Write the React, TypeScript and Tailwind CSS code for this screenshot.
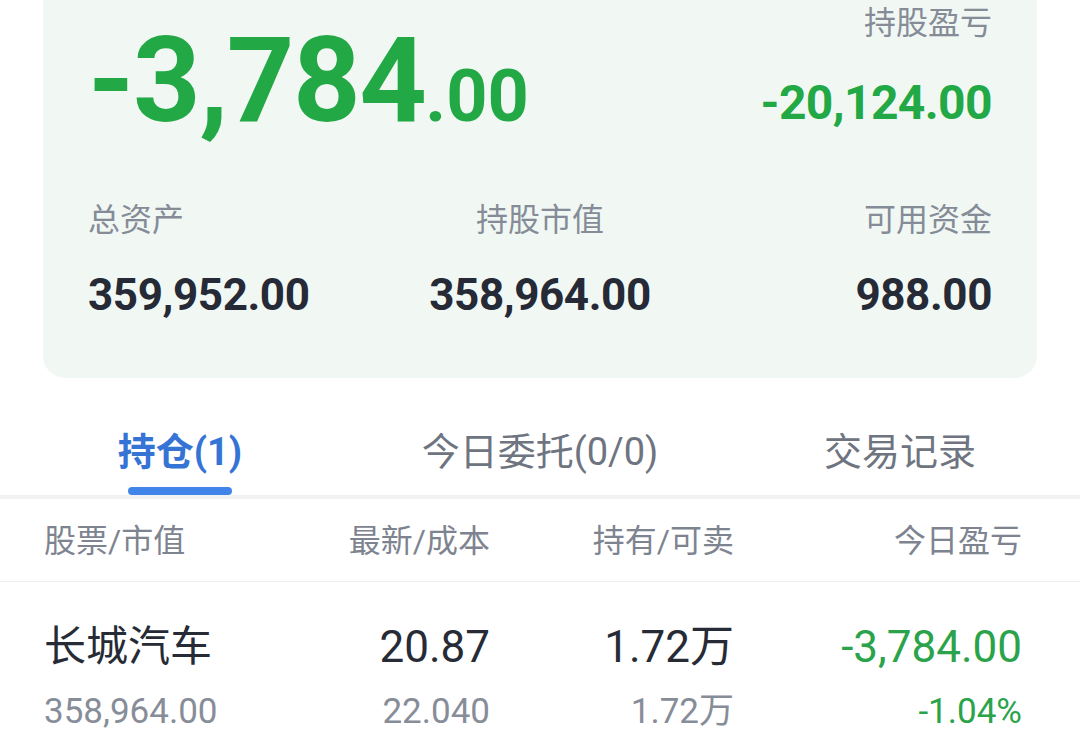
import React from "react";

const font = "font-['Roboto','Noto_Sans_CJK_SC',sans-serif]";

type Holding = {
  name: string;
  value: string;
  price: string;
  cost: string;
  hold: string;
  sellable: string;
  pnl: string;
  pct: string;
};

const holdings: Holding[] = [
  {
    name: "长城汽车",
    value: "358,964.00",
    price: "20.87",
    cost: "22.040",
    hold: "1.72万",
    sellable: "1.72万",
    pnl: "-3,784.00",
    pct: "-1.04%",
  },
];

const tabs = ["持仓(1)", "今日委托(0/0)", "交易记录"];

export default function App() {
  const active = 0;

  return (
    <div className={`w-[1080px] h-[750px] overflow-hidden bg-white ${font}`}>
      {/* 资产卡片 */}
      <div className="mx-[43px] rounded-b-[22px] bg-[#f1f8f4] px-[45px] pb-[61px]">
        <div className="flex justify-between">
          <div className="mt-[22px] text-[118px] leading-none font-bold text-[#22a845] tracking-[-1.5px]">
            -3,784<span className="text-[72px] tracking-normal">.00</span>
          </div>
          <div className="flex flex-col items-end pt-[7px]">
            <span className="text-[32px] leading-[32px] text-[#868c97]">持股盈亏</span>
            <span className="mt-[40px] text-[48px] leading-[48px] font-bold text-[#22a845] tracking-[-0.6px]">
              -20,124.00
            </span>
          </div>
        </div>

        <div className="mt-[64px] grid grid-cols-3 text-[32px] leading-[32px] text-[#868c97]">
          <span className="text-left">总资产</span>
          <span className="text-center">持股市值</span>
          <span className="text-right">可用资金</span>
        </div>
        <div className="mt-[37px] grid grid-cols-3 text-[44px] leading-[44px] font-bold text-[#252a36] tracking-[-0.4px]">
          <span className="text-left">359,952.00</span>
          <span className="text-center">358,964.00</span>
          <span className="text-right">988.00</span>
        </div>
      </div>

      {/* 标签栏 */}
      <div className="grid grid-cols-3 pt-[54px]">
        {tabs.map((tab, i) => (
          <div key={tab} className="flex flex-col items-center">
            <span
              className={`text-[38px] leading-[40px] ${
                i === active ? "font-bold text-[#3574d4]" : "text-[#6e7480]"
              }`}
            >
              {tab}
            </span>
            <div
              className={`mt-[15px] h-[8px] w-[104px] rounded-full ${
                i === active ? "bg-[#4285ea]" : "bg-transparent"
              }`}
            />
          </div>
        ))}
      </div>
      <div className="h-[4px] bg-[#f1f2f4]" />

      {/* 表头 */}
      <div className="grid grid-cols-[200px_246px_244px_288px] pl-[44px] pt-[26px] pb-[24px] text-[32px] leading-[32px] text-[#7e848f] border-b border-[#eceef1]">
        <span>股票/市值</span>
        <span className="text-right">最新/成本</span>
        <span className="text-right">持有/可卖</span>
        <span className="text-right">今日盈亏</span>
      </div>

      {/* 持仓列表 */}
      {holdings.map((h) => (
        <div key={h.name} className="grid grid-cols-[200px_246px_244px_288px] pl-[44px] pt-[40px]">
          <div className="flex flex-col">
            <span className="text-[42px] leading-[50px] text-[#262b36]">{h.name}</span>
            <span className="mt-[18px] text-[35px] leading-[44px] text-[#878d98]">{h.value}</span>
          </div>
          <div className="flex flex-col items-end">
            <span className="text-[44px] leading-[50px] text-[#262b36]">{h.price}</span>
            <span className="mt-[18px] text-[35px] leading-[44px] text-[#878d98]">{h.cost}</span>
          </div>
          <div className="flex flex-col items-end">
            <span className="text-[44px] leading-[50px] text-[#262b36]">{h.hold}</span>
            <span className="mt-[18px] text-[35px] leading-[44px] text-[#878d98]">{h.sellable}</span>
          </div>
          <div className="flex flex-col items-end">
            <span className="text-[44px] leading-[50px] text-[#2aa34b]">{h.pnl}</span>
            <span className="mt-[18px] text-[35px] leading-[44px] text-[#2aa34b]">{h.pct}</span>
          </div>
        </div>
      ))}
    </div>
  );
}
